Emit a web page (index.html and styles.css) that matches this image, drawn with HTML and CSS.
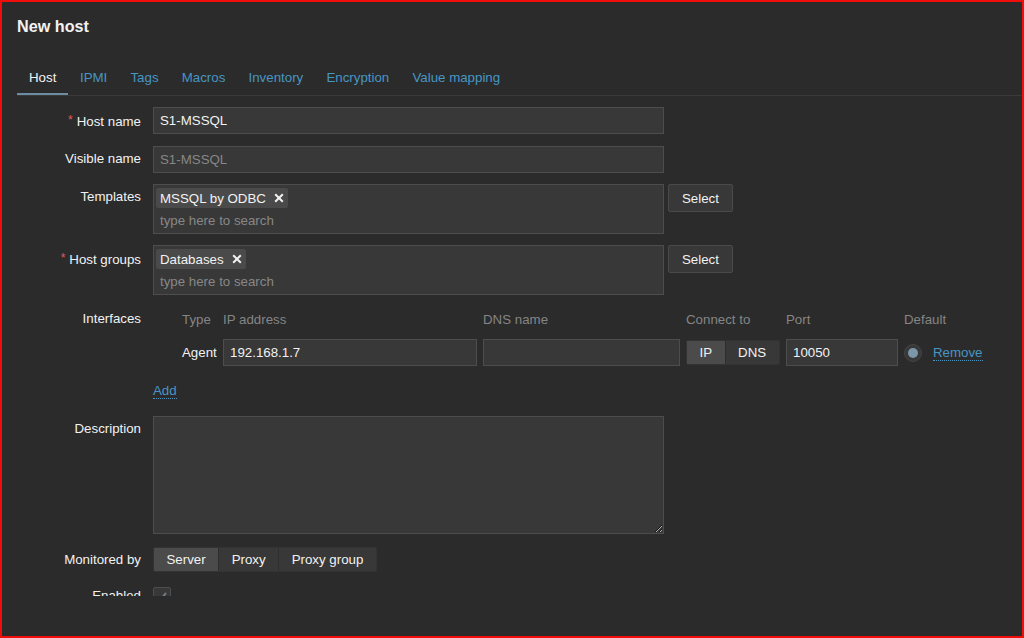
FILE: index.html
```html
<!DOCTYPE html>
<html lang="en">
<head>
  <meta charset="UTF-8">
  <meta name="viewport" content="width=device-width, initial-scale=1.0">
  <title>New host</title>
  <link rel="stylesheet" href="styles.css">
</head>
<body>
  <div class="dialog">
    <h2 class="dialog-title">New host</h2>

    <ul class="tabs">
      <li class="tab active">Host</li>
      <li class="tab">IPMI</li>
      <li class="tab">Tags</li>
      <li class="tab">Macros</li>
      <li class="tab">Inventory</li>
      <li class="tab">Encryption</li>
      <li class="tab">Value mapping</li>
    </ul>

    <div class="dialog-body">
      <form class="form-grid">
        <label class="form-label"><span class="req">*</span>Host name</label>
        <div class="form-field">
          <input type="text" class="text-input" value="S1-MSSQL">
        </div>

        <label class="form-label">Visible name</label>
        <div class="form-field">
          <input type="text" class="text-input" placeholder="S1-MSSQL">
        </div>

        <label class="form-label">Templates</label>
        <div class="form-field with-button">
          <div class="multiselect">
            <div class="chips">
              <span class="chip">MSSQL by ODBC
                <svg width="10" height="10" viewBox="0 0 10 10"><path d="M1.2 1.2L8.8 8.8M8.8 1.2L1.2 8.8" stroke="#f2f2f2" stroke-width="2"/></svg>
              </span>
            </div>
            <div class="ms-search">type here to search</div>
          </div>
          <button type="button" class="btn">Select</button>
        </div>

        <label class="form-label"><span class="req">*</span>Host groups</label>
        <div class="form-field with-button">
          <div class="multiselect">
            <div class="chips">
              <span class="chip">Databases
                <svg width="10" height="10" viewBox="0 0 10 10"><path d="M1.2 1.2L8.8 8.8M8.8 1.2L1.2 8.8" stroke="#f2f2f2" stroke-width="2"/></svg>
              </span>
            </div>
            <div class="ms-search">type here to search</div>
          </div>
          <button type="button" class="btn">Select</button>
        </div>

        <label class="form-label">Interfaces</label>
        <div class="form-field">
          <div class="iface-table">
            <span></span>
            <span class="iface-head">Type</span>
            <span class="iface-head">IP address</span>
            <span class="iface-head">DNS name</span>
            <span class="iface-head">Connect to</span>
            <span class="iface-head">Port</span>
            <span class="iface-head">Default</span>

            <span></span>
            <span class="iface-type">Agent</span>
            <input type="text" class="text-input" value="192.168.1.7">
            <input type="text" class="text-input" value="">
            <div class="segmented small">
              <span class="seg selected">IP</span>
              <span class="seg">DNS</span>
            </div>
            <input type="text" class="text-input" value="10050">
            <div class="iface-default">
              <span class="radio"><span class="radio-dot"></span></span>
              <a class="link">Remove</a>
            </div>
          </div>
        </div>

        <span></span>
        <div class="form-field add-row">
          <a class="link">Add</a>
        </div>

        <label class="form-label">Description</label>
        <div class="form-field">
          <textarea class="textarea"></textarea>
        </div>

        <label class="form-label monitored">Monitored by</label>
        <div class="form-field monitored">
          <div class="segmented">
            <span class="seg selected">Server</span>
            <span class="seg">Proxy</span>
            <span class="seg">Proxy group</span>
          </div>
        </div>

        <label class="form-label enabled">Enabled</label>
        <div class="form-field enabled">
          <span class="checkbox">
            <svg width="12" height="12" viewBox="0 0 12 12"><path d="M2 6.5L5 9L10 3" stroke="#6f7a82" stroke-width="2" fill="none"/></svg>
          </span>
        </div>
      </form>
    </div>
  </div>
</body>
</html>
```

FILE: styles.css
```css
body {
  margin: 0;
  background-color: #2b2b2b;
  font-family: 'Liberation Sans', Arial, sans-serif;
  font-size: 13.3px;
  color: #f2f2f2;
}

.dialog {
  width: 1024px;
  height: 638px;
  box-sizing: border-box;
  border: 2px solid #f20d0d;
  background-color: #2b2b2b;
  overflow: hidden;
}

.dialog-title {
  margin: 14px 0 0 15px;
  font-size: 16.2px;
  line-height: 20px;
  font-weight: bold;
  color: #f2f2f2;
}

/* tabs */
.tabs {
  display: flex;
  list-style: none;
  margin: 26px 0 0 15px;
  padding: 0;
  border-bottom: 1px solid #3a3a3a;
}

.tab {
  padding: 8px 11.6px 7px;
  line-height: 16px;
  color: #4796c4;
  border-bottom: 2px solid transparent;
}

.tab.active {
  padding: 8px 12px 7px;
  color: #f2f2f2;
  border-bottom-color: #6d8ba1;
}

.dialog-body {
  height: 500px;
  overflow: hidden;
  padding-top: 11px;
  box-sizing: border-box;
}

/* form */
.form-grid {
  display: grid;
  grid-template-columns: 139px 1fr;
  column-gap: 12px;
  row-gap: 11px;
  margin: 0;
}

.form-label {
  text-align: right;
  line-height: 26px;
  color: #f2f2f2;
  white-space: nowrap;
}

.req {
  color: #e45959;
  font-size: 12px;
  vertical-align: 2px;
  margin-right: 4px;
}

.form-field {
  display: flex;
  align-items: flex-start;
}

.form-field.with-button {
  gap: 4px;
}

.text-input {
  box-sizing: border-box;
  width: 511px;
  height: 27px;
  margin: 0;
  padding: 0 6px;
  background-color: #383838;
  border: 1px solid #4d4d4d;
  color: #f2f2f2;
  font-family: inherit;
  font-size: 13.3px;
  outline: none;
}

.text-input::placeholder {
  color: #878787;
}

.multiselect {
  box-sizing: border-box;
  width: 511px;
  height: 50px;
  background-color: #383838;
  border: 1px solid #4d4d4d;
}

.chips {
  padding: 3px 0 0 2px;
}

.chip {
  display: inline-flex;
  align-items: center;
  gap: 8px;
  height: 20px;
  padding: 0 4px;
  background-color: #4a4a4a;
  border-radius: 2px;
  color: #f2f2f2;
}

.ms-search {
  margin-top: 5px;
  padding-left: 6px;
  line-height: 16px;
  color: #878787;
}

.btn {
  box-sizing: border-box;
  height: 28px;
  padding: 0 13px;
  background-color: #383838;
  border: 1px solid #4a4a4a;
  border-radius: 2px;
  color: #f2f2f2;
  font-family: inherit;
  font-size: 13.3px;
}

/* interfaces */
.iface-table {
  display: grid;
  grid-template-columns: 23px 35px 254px 197px 94px 112px auto;
  grid-template-rows: 27px 27px;
  column-gap: 6px;
  row-gap: 6px;
  align-items: center;
}

.iface-head {
  color: #858585;
  white-space: nowrap;
}

.iface-type {
  white-space: nowrap;
}

.iface-table .text-input {
  width: 100%;
}

.iface-default {
  display: flex;
  align-items: center;
  gap: 11px;
}

.radio {
  box-sizing: border-box;
  width: 18px;
  height: 18px;
  border-radius: 50%;
  background-color: #383838;
  border: 1px solid #444;
  display: flex;
  align-items: center;
  justify-content: center;
}

.radio-dot {
  width: 10px;
  height: 10px;
  border-radius: 50%;
  background-color: #7b97a9;
}

.link {
  color: #4796c4;
  border-bottom: 1px dotted #4796c4;
  cursor: pointer;
}

.add-row {
  height: 28px;
  align-items: center;
}

/* segmented buttons */
.segmented {
  display: inline-flex;
  height: 25px;
  box-sizing: border-box;
  border: 1px solid #333;
  border-radius: 2px;
  background-color: #383838;
}

.segmented.small {
  align-self: center;
}

.seg {
  display: flex;
  align-items: center;
  padding: 0 12.5px;
  color: #f2f2f2;
  border-left: 1px solid #2e2e2e;
  white-space: nowrap;
}

.seg:first-child {
  border-left: none;
}

.seg.selected {
  background-color: #4b4b4b;
}

.textarea {
  box-sizing: border-box;
  width: 511px;
  height: 118px;
  margin: 0;
  background-color: #383838;
  border: 1px solid #4d4d4d;
  color: #f2f2f2;
  resize: vertical;
  color-scheme: dark;
  outline: none;
}

.form-label.monitored,
.form-field.monitored {
  margin-top: 2px;
  line-height: 25px;
}

.form-label.enabled,
.form-field.enabled {
  margin-top: 4px;
  line-height: 18px;
}

.checkbox {
  box-sizing: border-box;
  width: 18px;
  height: 18px;
  background-color: #383838;
  border: 1px solid #4d4d4d;
  border-radius: 2px;
  display: flex;
  align-items: center;
  justify-content: center;
}
```
